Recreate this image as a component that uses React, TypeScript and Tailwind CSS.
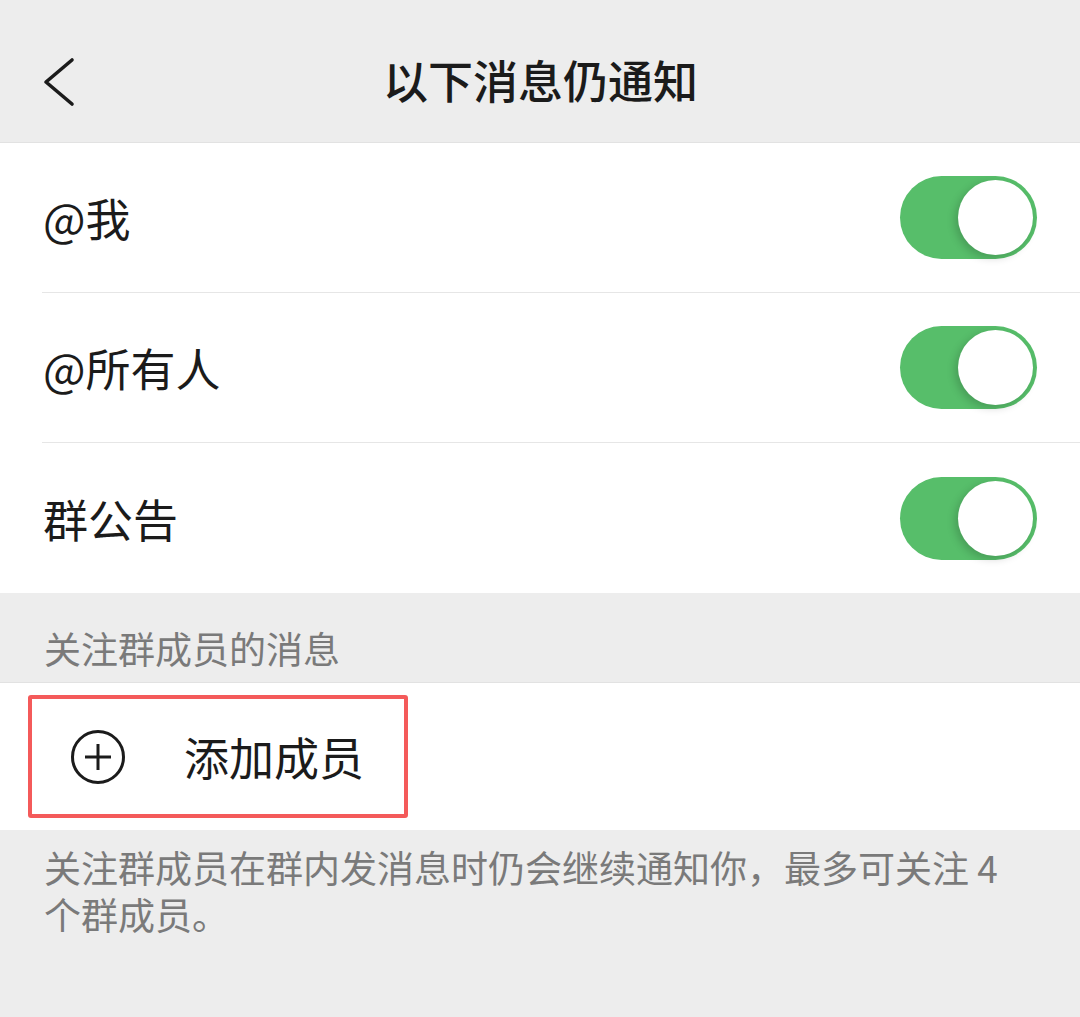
import React from "react";

const font = { fontFamily: '"Noto Sans CJK SC", "Noto Sans", sans-serif' };

const Toggle = () => (
  <div className="relative w-[137px] h-[83px] rounded-full bg-[#57be6a]">
    <div className="absolute right-[4px] top-[4px] w-[75px] h-[75px] rounded-full bg-white shadow-[-3px_3px_8px_rgba(0,0,0,0.18)]" />
  </div>
);

const Row = ({ label, last }: { label: string; last?: boolean }) => (
  <div className="flex items-center h-[150px] pl-[42px]">
    <div className={`flex flex-1 h-full items-center pr-[43px] ${last ? "" : "border-b border-[#e6e6e6]"}`}>
      <span className="flex-1 text-[45px] text-[#1b1b1b] leading-none pl-[1px]">{label}</span>
      <Toggle />
    </div>
  </div>
);

export default function App() {
  return (
    <div style={font} className="w-[1080px] h-[1017px] bg-[#ededed] overflow-hidden">
      {/* nav bar */}
      <div className="relative h-[143px] flex items-center justify-center pt-[16px] border-b border-[#e2e2e2]">
        <svg className="absolute left-[40px] top-[56px]" width="40" height="52" viewBox="0 0 40 52">
          <polyline points="32,4 6,26 32,48" fill="none" stroke="#1b1b1b" strokeWidth="3.6" strokeLinecap="round" strokeLinejoin="round" />
        </svg>
        <h1 className="text-[45px] font-medium text-[#1b1b1b] leading-none pl-[1px]">以下消息仍通知</h1>
      </div>

      <div className="bg-white">
        <Row label="@我" />
        <Row label="@所有人" />
        <Row label="群公告" last />
      </div>

      <div className="h-[90px] flex items-center px-[44px] pt-[22px] border-b border-[#e2e2e2]">
        <span className="text-[37px] text-[#7a7a7a] leading-none">关注群成员的消息</span>
      </div>

      <div className="bg-white h-[147px] flex items-center pl-[28px]">
        <div className="flex items-center w-[380px] h-[123px] border-[4px] border-[#f45a5a] rounded-[3px]">
          <svg className="ml-[38px]" width="56" height="56" viewBox="0 0 56 56">
            <circle cx="28" cy="28" r="25.5" fill="none" stroke="#1b1b1b" strokeWidth="3" />
            <line x1="28" y1="15" x2="28" y2="41" stroke="#1b1b1b" strokeWidth="3" />
            <line x1="15" y1="28" x2="41" y2="28" stroke="#1b1b1b" strokeWidth="3" />
          </svg>
          <span className="ml-[58px] text-[45px] text-[#1b1b1b] leading-none">添加成员</span>
        </div>
      </div>

      <div className="px-[44px] pt-[14px] text-[37px] leading-[47px] text-[#7a7a7a]">
        关注群成员在群内发消息时仍会继续通知你，最多可关注 4 个群成员。
      </div>
    </div>
  );
}
